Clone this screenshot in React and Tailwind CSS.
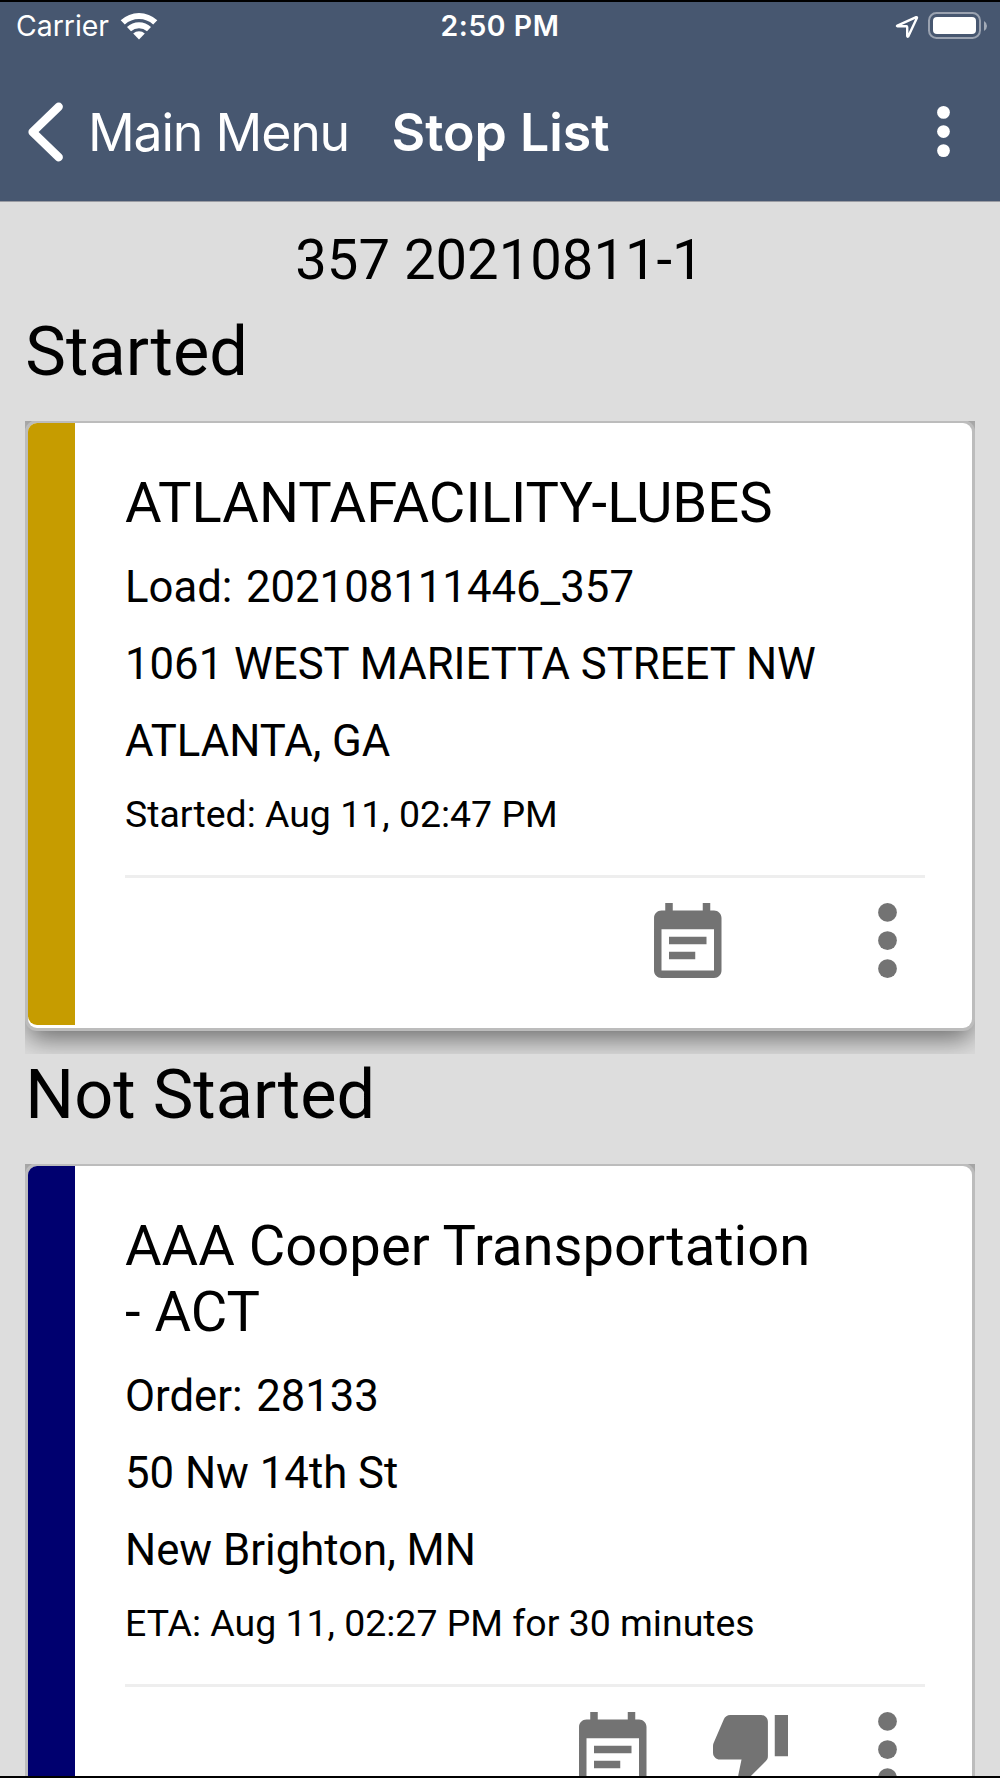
import React from "react";

function WifiIcon() {
  return (
    <svg className="ml-[11px] h-[28px] w-[38px]" viewBox="0 0 38 28" fill="white">
      <path d="M0.7 8.2A27 27 0 0 1 37.3 8.2L33.2 12.6A21 21 0 0 0 4.8 12.6Z" />
      <path d="M7 15A17.7 17.7 0 0 1 31 15L27 19.2A12 12 0 0 0 11 19.2Z" />
      <path d="M13.2 21.6A8.6 8.6 0 0 1 24.8 21.6L19 27.6Z" />
    </svg>
  );
}

function LocationIcon() {
  return (
    <svg className="h-[24px] w-[24px]" viewBox="0 0 24 24" fill="none" stroke="white" strokeWidth="2.4" strokeLinejoin="round">
      <path d="M2.4 11.6 21.2 3.2Q22.2 2.9 21.9 4L13.2 22.4Q12.3 23.2 12.2 22V13.1Q12.1 12.4 11.4 12.3H2.6Q1.4 12.1 2.4 11.6Z" />
    </svg>
  );
}

function Battery() {
  return (
    <div className="flex items-center gap-[3px]">
      <div className="h-[27px] w-[53px] rounded-[8.5px] border-2 border-white/45 p-[3px]">
        <div className="h-full w-full rounded-[4px] bg-white" />
      </div>
      <svg className="h-[10px] w-[3px]" viewBox="0 0 3 10">
        <path d="M0 0Q3 1.8 3 5T0 10Z" fill="white" fillOpacity="0.5" />
      </svg>
    </div>
  );
}

function Dots({ className }) {
  return (
    <svg className={className} viewBox="0 0 4 16" fill="currentColor">
      <circle cx="2" cy="2" r="2" />
      <circle cx="2" cy="8" r="2" />
      <circle cx="2" cy="14" r="2" />
    </svg>
  );
}

function NoteIcon() {
  return (
    <svg className="h-[75px] w-[67.5px]" viewBox="3 1 18 20" fill="currentColor">
      <path d="M17 10H7v2h10v-2zm2-7h-1V1h-2v2H8V1H6v2H5c-1.11 0-1.99.9-1.99 2L3 19c0 1.1.89 2 2 2h14c1.1 0 2-.9 2-2V5c0-1.1-.9-2-2-2zm0 16H5V8h14v11zm-5-5H7v2h7v-2z" />
    </svg>
  );
}

function ThumbDownIcon() {
  return (
    <svg className="mt-[3px] ml-[66px] h-[68.6px] w-[75.5px]" viewBox="1 3 22 20" fill="currentColor">
      <path d="M15 3H6c-.83 0-1.54.5-1.84 1.22l-3.02 7.05c-.09.23-.14.47-.14.73v2c0 1.1.9 2 2 2h6.31l-.95 4.57-.03.32c0 .41.17.79.44 1.06L9.83 23l6.59-6.59c.36-.36.58-.86.58-1.41V5c0-1.1-.9-2-2-2zm4 0v12h4V3h-4z" />
    </svg>
  );
}

function StopCard({ barClass, name, reference, lines, time, thumb }) {
  return (
    <div className="mx-[25px] shrink-0 overflow-hidden bg-[linear-gradient(#ababab_0px,#b4b4b4_6px,#dddddd_14px)] px-[3px] pt-[2px] pb-[26px]">
      <div className="flex rounded-[9px] bg-white pb-[3px] shadow-[0_0_0_3px_#bcbcbc,0_11px_27px_rgba(0,0,0,0.52)]">
        <div className={"w-[47px] shrink-0 rounded-l-[9px] " + barClass} />
        <div className="flex flex-1 flex-col pt-[48px] pr-[47px] pb-[47.4px] pl-[50px]">
          <h3 className="text-[56.15px] leading-[65.6px] whitespace-pre">{name}</h3>
          <div className="mt-[12.8px] flex gap-[13.5px] text-[43.7px] leading-[76.9px] whitespace-nowrap">
            <span>{reference[0]}</span>
            <span>{reference[1]}</span>
          </div>
          {lines.map((line) => (
            <div key={line} className="text-[43.7px] leading-[76.9px] whitespace-nowrap">
              {line}
            </div>
          ))}
          <div className="mt-[3.6px] text-[37.45px] leading-[60px] whitespace-nowrap">{time}</div>
          <div className="mt-[31.3px] h-[3px] shrink-0 bg-[#eeeeee]" />
          <div className="mt-[25px] flex items-start justify-end pr-[28px] text-[#737373]">
            <NoteIcon />
            {thumb && <ThumbDownIcon />}
            <Dots className={thumb ? "ml-[90px] h-[75px] w-[19px]" : "ml-[156.5px] h-[75px] w-[19px]"} />
          </div>
        </div>
      </div>
    </div>
  );
}

export default function App() {
  return (
    <div className="flex h-[1778px] w-[1000px] flex-col overflow-hidden border-y-2 border-black bg-[#dddddd] font-['Roboto',sans-serif] text-black">
      <header className="h-[200px] shrink-0 border-b border-[#9a9ca3] bg-[#475770] font-['Inter',sans-serif] text-white">
        <div className="grid h-[46px] grid-cols-3 items-center pr-[13px] pl-[16px] text-[28.4px] leading-[46px]">
          <div className="flex items-center">
            <span className="pt-px">Carrier</span>
            <WifiIcon />
          </div>
          <div className="pt-px pr-[3px] text-center font-semibold tracking-[0.55px]">2:50 PM</div>
          <div className="flex items-center justify-end gap-[9px]">
            <LocationIcon />
            <Battery />
          </div>
        </div>
        <div className="mt-[44px] flex h-[80px] items-center pr-[50px] pl-[28px] text-[51.8px] leading-[80px] whitespace-nowrap">
          <svg className="h-[60px] w-[36px]" viewBox="0 0 36 60" fill="none" stroke="white" strokeWidth="8.4" strokeLinecap="round" strokeLinejoin="round">
            <path d="M30.7 4.8 4.6 30 30.7 55.2" />
          </svg>
          <span className="ml-[24px] tracking-[-1.2px]">Main Menu</span>
          <span className="ml-[42.5px] font-semibold">Stop List</span>
          <Dots className="mb-[2px] ml-auto h-[51px] w-[13px]" />
        </div>
      </header>
      <main className="flex flex-1 flex-col overflow-hidden">
        <h1 className="mt-[25px] h-[66px] shrink-0 pr-px text-center text-[56.2px] leading-[66px]">357 20210811-1</h1>
        <h2 className="mt-[19px] mb-[29px] h-[80px] shrink-0 pl-[25.3px] text-[68.5px] leading-[80px]">Started</h2>
        <StopCard
          barClass="bg-[#c69c00]"
          name="ATLANTAFACILITY-LUBES"
          reference={["Load:", "202108111446_357"]}
          lines={["1061 WEST MARIETTA STREET NW", "ATLANTA, GA"]}
          time="Started: Aug 11, 02:47 PM"
        />
        <h2 className="mb-[30px] h-[80px] shrink-0 pl-[25.3px] text-[68.5px] leading-[82px]">Not Started</h2>
        <StopCard
          barClass="bg-[#00006f]"
          name={"AAA Cooper Transportation\n- ACT"}
          reference={["Order:", "28133"]}
          lines={["50 Nw 14th St", "New Brighton, MN"]}
          time="ETA: Aug 11, 02:27 PM for 30 minutes"
          thumb
        />
      </main>
    </div>
  );
}
